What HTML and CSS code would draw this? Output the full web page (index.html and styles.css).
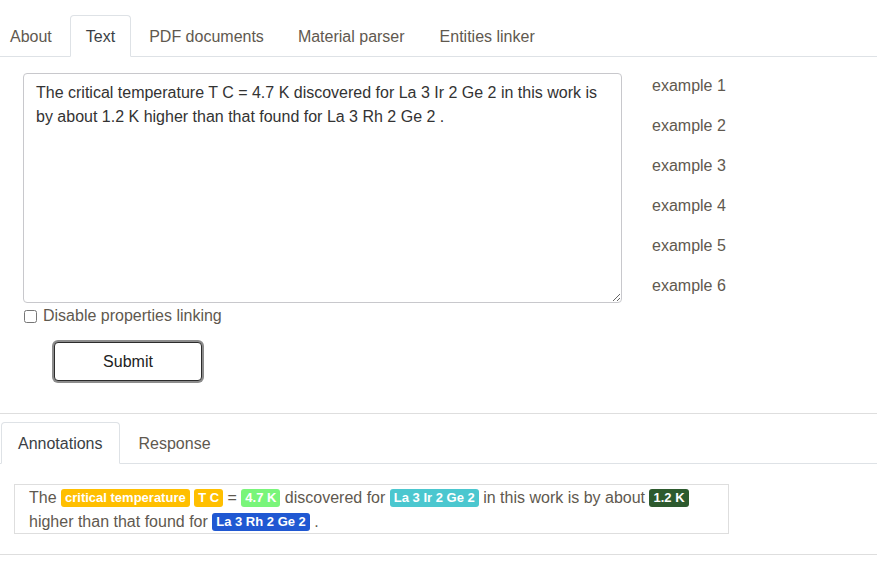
FILE: index.html
```html
<!DOCTYPE html>
<html>
<head>
<meta charset="utf-8">
<link rel="stylesheet" href="styles.css">
</head>
<body>
<ul class="tabs top-tabs">
  <li class="tab">About</li>
  <li class="tab active">Text</li>
  <li class="tab">PDF documents</li>
  <li class="tab">Material parser</li>
  <li class="tab">Entities linker</li>
</ul>
<div class="panel">
  <div class="input-row">
    <div class="input-col">
      <textarea class="text-input">The critical temperature T C = 4.7 K discovered for La 3 Ir 2 Ge 2 in this work is by about 1.2 K higher than that found for La 3 Rh 2 Ge 2 .</textarea>
      <label class="check"><input type="checkbox" class="box"> Disable properties linking</label>
      <div class="btn-row"><button class="submit">Submit</button></div>
    </div>
    <ul class="examples">
      <li>example 1</li>
      <li>example 2</li>
      <li>example 3</li>
      <li>example 4</li>
      <li>example 5</li>
      <li>example 6</li>
    </ul>
  </div>
</div>
<hr class="sep sep-top">
<ul class="tabs result-tabs">
  <li class="tab active">Annotations</li>
  <li class="tab">Response</li>
</ul>
<div class="result-panel">
  <div class="annot">The <span class="lbl amber">critical temperature</span> <span class="lbl amber">T C</span> = <span class="lbl lime">4.7 K</span> discovered for <span class="lbl teal">La 3 Ir 2 Ge 2</span> in this work is by about <span class="lbl dgreen">1.2 K</span> higher than that found for <span class="lbl blue">La 3 Rh 2 Ge 2</span> .</div>
</div>
<hr class="sep sep-bottom">
</body>
</html>
```
FILE: styles.css
```css
html, body {
  margin: 0;
  padding: 0;
  background: #fff;
  font-family: "Liberation Sans", Arial, sans-serif;
  font-size: 16px;
  color: #5f594f;
}
.tabs {
  list-style: none;
  margin: 0;
  padding: 0;
  display: flex;
  border-bottom: 1px solid #dee2e6;
}
.top-tabs {
  margin-top: 15px;
  padding-left: 0;
  margin-left: -7px;
  width: calc(100% + 7px);
}
.tab {
  padding: 11px 15px 9px;
  line-height: 20px;
  margin-right: 2px;
  margin-bottom: -1px;
  border: 1px solid transparent;
  border-radius: 4px 4px 0 0;
  color: #5f594f;
}
.top-tabs .tab:first-child {
  padding-left: 16px;
}
.top-tabs .tab:last-child {
  padding-left: 16px;
}
.tab.active {
  color: #3b3f45;
  background: #fff;
  border-color: #dee2e6 #dee2e6 #fff;
}
.panel {
  padding: 16px 0 0 23px;
}
.input-row {
  display: flex;
  gap: 30px;
}
.input-col {
  width: 599px;
}
.text-input {
  display: block;
  box-sizing: border-box;
  width: 599px;
  height: 230px;
  margin: 0;
  padding: 7px 12px;
  border: 1px solid #c8c8cc;
  border-radius: 4px;
  font-family: "Liberation Sans", Arial, sans-serif;
  font-size: 16px;
  line-height: 24px;
  color: #333;
  resize: vertical;
}
.check {
  display: flex;
  align-items: center;
  gap: 6px;
  margin-top: 3px;
  line-height: 20px;
  color: #5f594f;
}
.box {
  margin: 0 0 0 1px;
  width: 13px;
  height: 13px;
}
.btn-row {
  padding: 16px 0 0 31px;
}
.submit {
  width: 148px;
  height: 39px;
  background: #fff;
  border: 1px solid #2b2b2b;
  border-radius: 4px;
  box-shadow: 0 0 0 2px #8c8c8c;
  font-family: "Liberation Sans", Arial, sans-serif;
  font-size: 16px;
  color: #222;
}
.examples {
  list-style: none;
  margin: 3px 0 0;
  padding: 0;
}
.examples li {
  line-height: 20px;
  margin-bottom: 20px;
  color: #5f594f;
}
.sep {
  border: 0;
  border-top: 1px solid #dedede;
  margin: 0;
}
.sep-top {
  margin-top: 32px;
}
.result-tabs {
  margin-top: 8px;
  padding-left: 1px;
}
.result-tabs .tab {
  padding-left: 16px;
  padding-right: 16px;
}
.result-panel {
  padding: 20px 0 0 14px;
}
.annot {
  width: 715px;
  box-sizing: border-box;
  border: 1px solid #dedede;
  padding: 1px 14px 0;
  height: 50px;
  line-height: 24px;
  color: #5f594f;
}
.lbl {
  display: inline-block;
  font-size: 13px;
  font-weight: bold;
  line-height: 18px;
  padding: 0 4px;
  border-radius: 3px;
  color: #fff;
  vertical-align: 1px;
}
.amber { background: #ffbf00; }
.lime { background: #79f57a; }
.teal { background: #4bc7cf; }
.dgreen { background: #2d5a2e; }
.blue { background: #2058d2; }
.sep-bottom {
  margin-top: 20px;
}
```
